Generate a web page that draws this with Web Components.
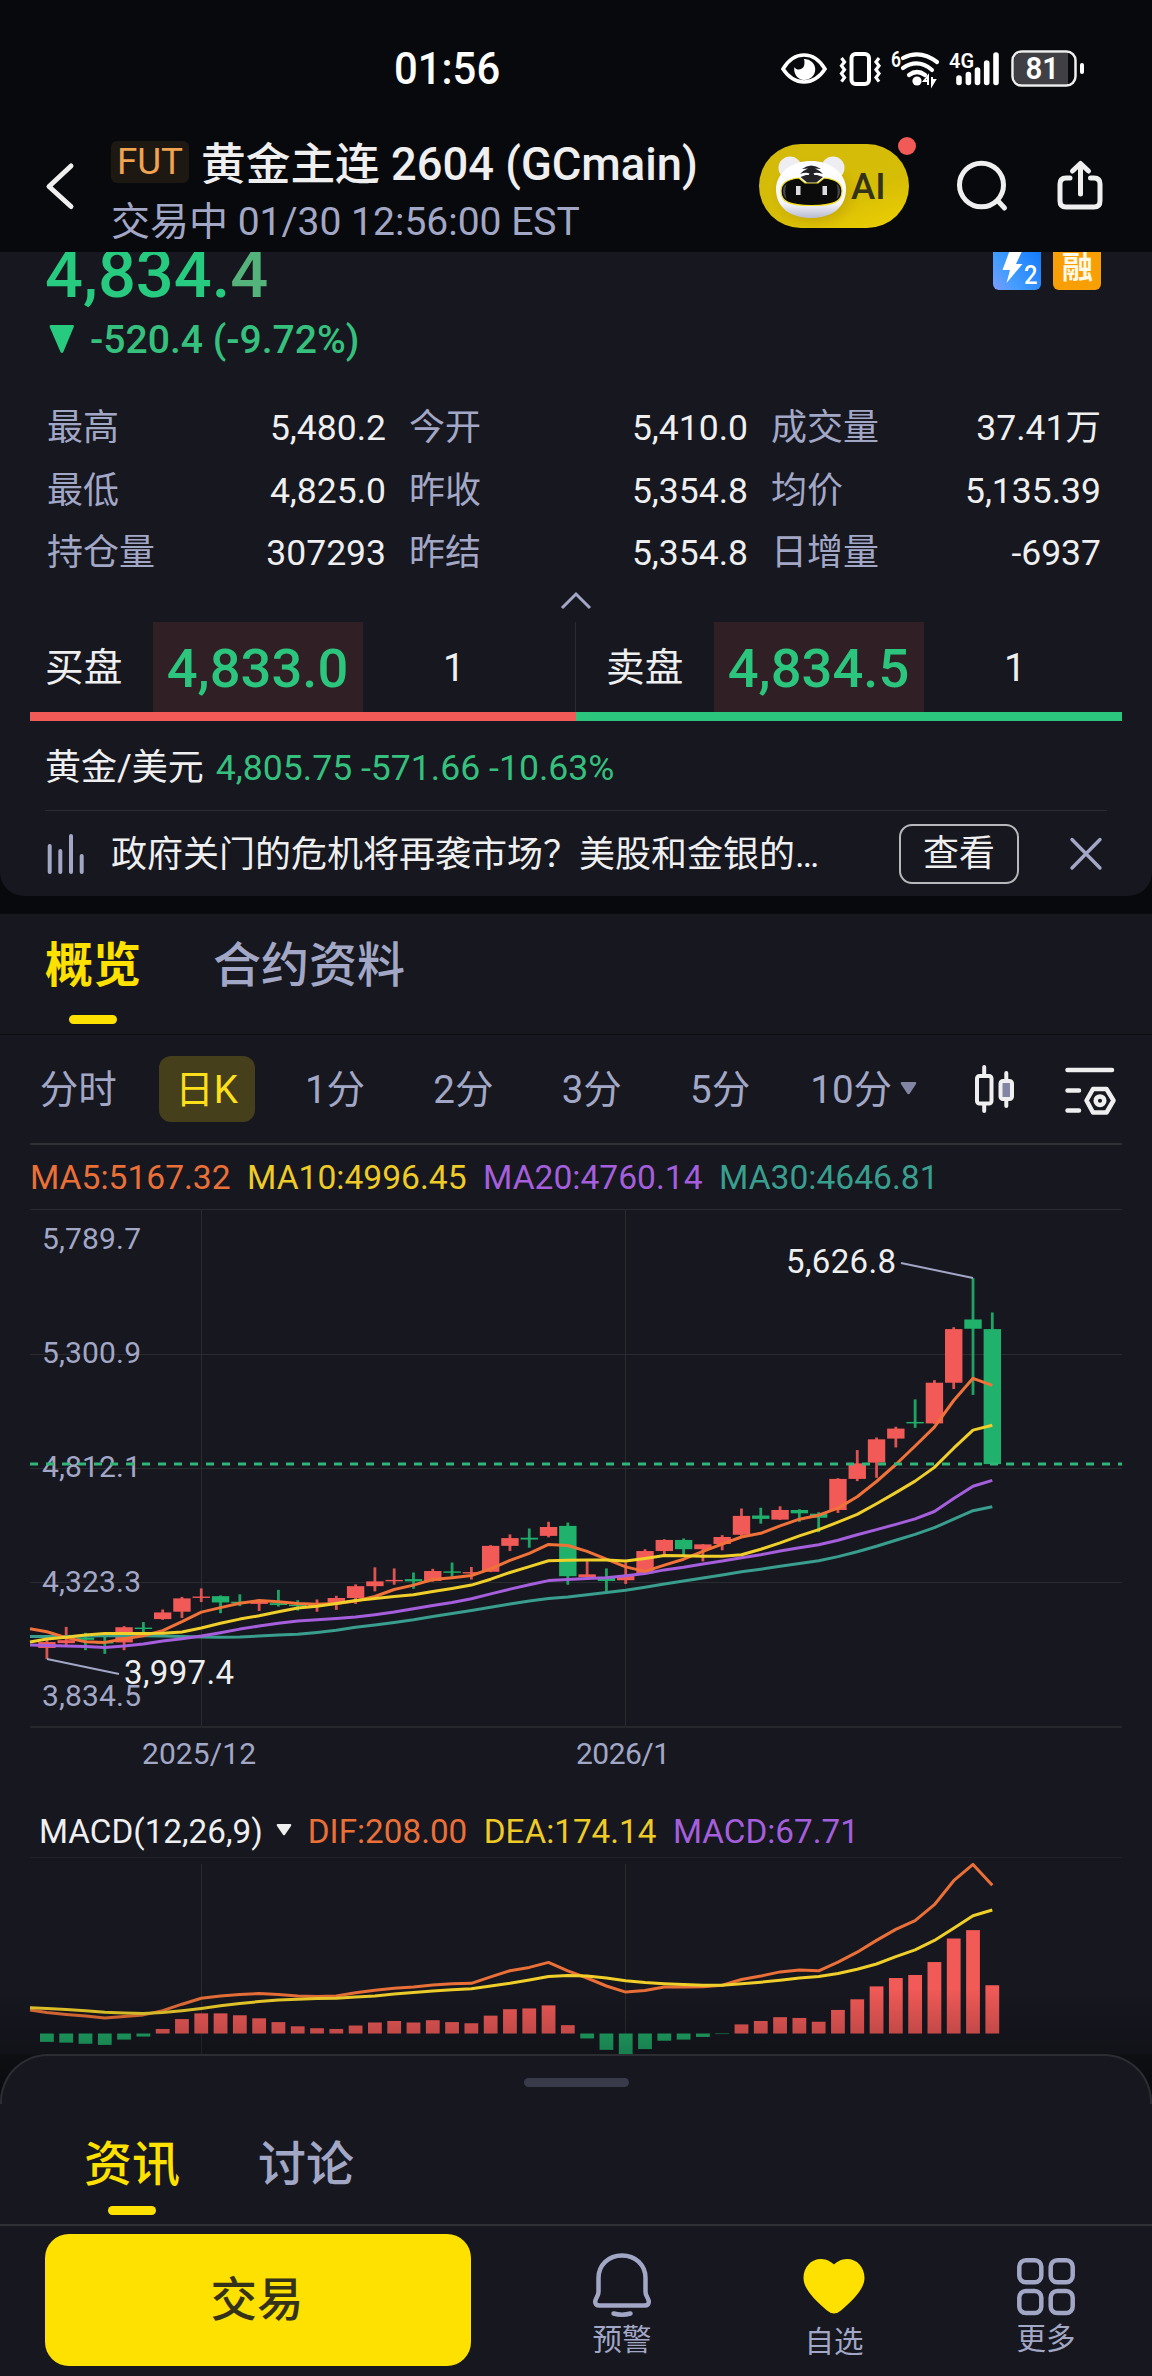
<!DOCTYPE html>
<html lang="zh-CN">
<head>
<meta charset="utf-8">
<title>黄金主连 2604 (GCmain)</title>
<style>
  :root {
    --bg: #16171f; --dark: #07090c; --muted: #a3a7c6; --text: #efeff0; --line: #2c2c32;
    --green: #2bc57d; --red: #f25a57; --yellow: #ffe100;
    --orange: #ea7038; --gold: #eecb26; --purple: #a55fdc; --teal: #399e8d;
  }
  html, body { margin: 0; background: var(--dark); }
  body { width: 1152px; height: 2376px; overflow: hidden; color: var(--text); font-family: Roboto, "Noto Sans CJK SC", sans-serif; }
</style>
</head>
<body>
<trade-app></trade-app>
<script>
function define(name, html, setup) {
  const t = document.createElement('template');
  t.innerHTML = html;
  customElements.define(name, class extends HTMLElement {
    constructor() {
      super();
      this.attachShadow({ mode: 'open' }).appendChild(t.content.cloneNode(true));
    }
    connectedCallback() { if (setup) setup(this, this.shadowRoot); }
  });
}

define('status-bar', `
<style>
  :host { display: flex; height: 137px; box-sizing: border-box; padding: 0 68px 0 394px; align-items: center; justify-content: space-between; color: #fff; }
  .time { font-size: 45px; font-weight: 500; line-height: 52px; transform: scaleX(.93); transform-origin: 0 50%; }
  .icons { display: flex; align-items: center; }
  svg { display: block; overflow: visible; }
  .battery { position: relative; width: 66px; height: 37px; margin-left: 2px; display: flex; align-items: center; justify-content: center; font-weight: 600; font-size: 32px; line-height: 37px; margin-right: 7px; }
  .battery svg { position: absolute; left: 0; top: 0; }
  .battery span { position: relative; transform: scaleX(.92); left: -2px; }
</style>
<div class="time">01:56</div>
<div class="icons">
  <svg width="228" height="37" viewBox="0 0 228 37" fill="none" stroke="#fff">
    <path d="M2 19C8 9 15 5 23 5s15 4 21 14C38 28 31 32 23 32S8 28 2 19Z" stroke-width="3.6"/>
    <path d="M23 9a10.500 10.500 0 1 1-9.500 8c2 4 8 3 9.500-1 .8-2.600.5-5 0-7Z" fill="#fff" stroke="none"/>
    <rect x="70.500" y="4" width="17.500" height="30" rx="4" stroke-width="4"/>
    <path d="M60.500 8l3 4-3 3.800 3 4-3 3.800 3 4-3 4" stroke-width="3.200"/>
    <path d="M98 8l-3 4 3 3.800-3 4 3 3.800-3 4 3 4" stroke-width="3.200"/>
    <g stroke-width="4.200" stroke-linecap="round"><path d="M122 8Q139 -1 156 12"/><path d="M122 18Q137 8 151 20"/><path d="M128 25Q136 19 144 25"/></g>
    <circle cx="136" cy="31" r="4.600" fill="#fff" stroke="none"/>
    <path d="M147 35V26l-4 5h5M151 27v8l3-5h-3" stroke-width="2"/>
    <g stroke-width="5.600" stroke-linecap="round"><path d="M178 28v4.500M187.400 24.500v8M196.500 20v12.500M205.700 13v19.500M215 5v27.500"/></g>
    <g fill="#fff" stroke="none" font-family="Roboto" font-weight="600"><text x="110" y="17" font-size="22" textLength="10" lengthAdjust="spacingAndGlyphs">6</text><text x="168" y="18" font-size="21" textLength="25" lengthAdjust="spacingAndGlyphs">4G</text></g>
  </svg>
  <div class="battery">
    <svg width="74" height="37" viewBox="0 0 74 37"><rect x="1.500" y="1.500" width="63" height="34" rx="9" fill="#07090c" stroke="#eee" stroke-width="2.500"/><path d="M10 3H57V34H10a7 7 0 0 1-7-7V10a7 7 0 0 1 7-7Z" fill="#404044"/><rect x="69" y="13" width="4" height="11" rx="2" fill="#fff"/></svg>
    <span>81</span>
  </div>
</div>`);

define('ai-pill', `
<style>
  :host { display: block; position: relative; width: 150px; height: 84px; border-radius: 42px; background: linear-gradient(160deg, #d3ba0b, #d6bd06 60%, #eed003); }
  svg { display: block; }
  b { position: absolute; left: 92px; top: 22px; font-weight: 500; font-size: 36.500px; line-height: 42px; color: #34331a; }
  i { position: absolute; right: -7px; top: -7px; width: 18px; height: 18px; border-radius: 50%; background: #f25a57; }
</style>
<svg width="150" height="84" viewBox="0 0 150 84">
  <defs><linearGradient id="h" x2="0" y2="1"><stop offset=".1" stop-color="#fff"/><stop offset=".75" stop-color="#f4f4fa"/><stop offset="1" stop-color="#b9bbd0"/></linearGradient>
  <radialGradient id="s"><stop offset=".4" stop-color="#a88700" stop-opacity=".7"/><stop offset="1" stop-color="#c9a800" stop-opacity="0"/></radialGradient></defs>
  <ellipse cx="56" cy="50" rx="46" ry="38" fill="url(#s)"/>
  <circle cx="31" cy="24" r="11.500" fill="#eeeef2"/><circle cx="74" cy="24" r="11.500" fill="#eeeef2"/>
  <path d="M52 17C70 17 85 27 87 43C88 64 72 74 52 74S16 64 17 43C19 27 34 17 52 17Z" fill="url(#h)"/>
  <path d="M22 47C22 38 30 35 40 34L46 39H59L65 34C75 35 83 38 83 47C83 58 74 61.500 52.500 61.500S22 58 22 47Z" fill="#0c0b0b" stroke="#f2df1d" stroke-width="1.200"/>
  <path d="M24 47.500c0-4.500 1.500-6.500 3.500-7.500-1.600 5-1.600 10 0 15-2.300-2-3.500-4.500-3.500-7.500ZM81 47.500c0-4.500-1.500-6.500-3.500-7.500 1.600 5 1.600 10 0 15 2.300-2 3.500-4.500 3.500-7.500Z" fill="#47474c"/>
  <path d="M41.500 33L48 38.500H57.500L64 33L58 31H47Z" fill="#242428"/>
  <path d="M43 25Q52 18 62 25L56 24.500Q60 26 64 30Q57 28 54.500 29.500L57 34H48L50.500 29.500Q47 28 41 30Q45 26 49 24.500Z" fill="#222226"/>
  <path d="M37 42h4.500v9H37zM63.500 42H68v9h-4.500z" fill="#dcdce0"/>
</svg><b>AI</b><i></i>`);

define('quote-header', `
<style>
  :host { display: flex; height: 115px; box-sizing: border-box; padding: 3px 45px 0 45px; align-items: flex-start; }
  svg { display: block; fill: none; stroke: #efeff0; stroke-width: 5; stroke-linecap: round; stroke-linejoin: round; }
  .titles { margin-left: 36px; width: 600px; margin-right: 48px; }
  .title { display: flex; align-items: center; height: 50px; font-size: 44.700px; line-height: 50px; font-weight: 500; white-space: nowrap; }
  .title em { font-style: normal; font-size: 45.300px; }
  .tag { box-sizing: border-box; width: 78px; height: 42px; margin: -6px 12px 0 0; border-radius: 6px; background: #1e1812; color: #f0a350; font-size: 36.800px; font-weight: 400; line-height: 41px; text-align: center; }
  .sub { margin-top: 9px; height: 46px; line-height: 46px; font-size: 39px; color: #a3a7c6; white-space: nowrap; }
</style>
<svg width="31" height="50" viewBox="0 0 31 50" style="margin:21px 0 0 -1px"><path d="M27 5L5 25.500L27 45.500"/></svg>
<div class="titles">
  <div class="title"><div class="tag">FUT</div><span>黄金主连<em> 2604 (GCmain)</em></span></div>
  <div class="sub"><span>交易中 01/30 12:56:00 EST</span></div>
</div>
<ai-pill style="margin-top:4px"></ai-pill>
<svg width="54" height="54" viewBox="0 0 54 54" style="margin:18px 0 0 46px"><ellipse cx="26.500" cy="27" rx="22" ry="21.800"/><path d="M43.500 43.500L49.500 50"/></svg>
<svg width="50" height="52" viewBox="0 0 50 52" style="margin:20px 0 0 47px"><path d="M14 18H10Q4 18 4 24V41Q4 47 10 47H38Q44 47 44 41V24Q44 18 38 18H34.500M24.500 34V4M16.500 11L24.500 3.500L32.500 11"/></svg>`);

define('stat-item', `
<style>
  :host { display: flex; justify-content: space-between; height: 62.700px; line-height: 64px; font-size: 35.500px; }
  .l { color: var(--muted); font-size: 36px; }
</style>
<span class="l"></span><span><slot></slot></span>`, (el, r) => r.querySelector('.l').textContent = el.getAttribute('label'));

define('order-side', `
<style>
  :host { display: flex; align-items: center; height: 90px; font-size: 38.700px; }
  .l { width: 108px; line-height: 93px; }
  .p { width: 209px; height: 90px; padding-right: 1px; background: #301f25; color: var(--green); font-weight: 500; font-size: 54.300px; line-height: 93px; text-align: center; }
  .q { margin-left: 80px; line-height: 93px; }
</style>
<span class="l"></span><div class="p"><slot></slot></div><span class="q">1</span>`,
(el, r) => r.querySelector('.l').textContent = el.getAttribute('label'));

define('quote-card', `
<style>
  :host { display: block; box-sizing: border-box; height: 644px; overflow: hidden; background: var(--bg); border-radius: 0 0 24px 24px; }
  .top { display: flex; justify-content: space-between; padding: 0 51px 0 45px; height: 52px; align-items: flex-start; }
  .price { font-size: 66.800px; font-weight: 500; line-height: 60px; margin-top: -8px; color: #27cb80; }
  .price i { font-style: normal; color: #54b27b; }
  .badges { display: flex; gap: 12px; margin-top: -10px; }
  .badges svg { display: block; }
  .chg { display: flex; align-items: center; height: 44px; margin: 14px 0 0 49px; font-size: 39.100px; line-height: 44px; font-weight: 500; color: #36c07d; }
  .chg svg { margin: -3px 15px 0 0; }
  .stats { display: grid; grid-template-columns: 339px 339px 330px; column-gap: 23px; height: 189px; align-content: start; margin: 34px 0 0 47px; }
  .up { display: flex; justify-content: center; height: 37px; align-items: center; }
  .up svg { margin-top: -5px; }
  .sides { display: flex; height: 90px; }
  order-side:first-child { padding-left: 45px; width: 530px; border-right: 1px solid #2b2c33; }
  order-side:last-child { padding-left: 30px; }
  .bar { display: flex; height: 9px; margin: 0 30px; }
  .bar i { flex: 1; background: var(--red); } .bar i + i { background: var(--green); }
  .spot { display: flex; height: 83px; padding-top: 6px; margin: 0 45px; line-height: 82px; font-size: 36px; gap: 12px; border-bottom: 1px solid var(--line); box-sizing: content-box; }
  .spot span + span { color: #36c07d; font-size: 35.600px; }
  .note { display: flex; align-items: center; height: 85px; padding: 0 49px 0 47px; font-size: 36px; line-height: 52px; }
  .note p { margin: 3px auto 0 27px; white-space: nowrap; }
  .note button { all: unset; box-sizing: border-box; width: 120px; height: 60px; border: 2px solid #b8b8bc; border-radius: 13px; text-align: center; line-height: 57px; margin-right: 50px; }
</style>
<div class="top">
  <div class="price">4,834.<i>4</i></div>
  <div class="badges">
    <svg width="48" height="48" viewBox="0 0 48 48"><defs><linearGradient id="b" x1="0" y1="1" x2="1" y2=".3"><stop offset="0" stop-color="#7d9bff"/><stop offset=".35" stop-color="#449dff"/><stop offset="1" stop-color="#187dfb"/></linearGradient></defs><rect width="48" height="48" rx="6" fill="url(#b)"/><path d="M18 5H31L23 22H29.500L13.500 41L17 28H9.500Z" fill="#fff"/><text x="31" y="41.500" font-family="Roboto" font-weight="500" font-size="26" textLength="13.500" lengthAdjust="spacingAndGlyphs" fill="#fff">2</text></svg>
    <svg width="48" height="48" viewBox="0 0 48 48"><rect width="48" height="48" rx="6" fill="#f99f06"/><text x="9" y="36" font-family="Noto Sans CJK SC" font-weight="700" font-size="31" fill="#fffbe8">融</text></svg>
  </div>
</div>
<div class="chg"><svg width="26" height="30" viewBox="0 0 26 30"><path d="M2 1H23.500Q25.500 1 24.700 3L14.300 28Q13 30 11.500 28L.7 3Q0 1 2 1Z" fill="#27cb80"/></svg>-520.4 (-9.72%)</div>
<div class="stats">
  <stat-item label="最高">5,480.2</stat-item><stat-item label="今开">5,410.0</stat-item><stat-item label="成交量">37.41万</stat-item>
  <stat-item label="最低">4,825.0</stat-item><stat-item label="昨收">5,354.8</stat-item><stat-item label="均价">5,135.39</stat-item>
  <stat-item label="持仓量">307293</stat-item><stat-item label="昨结">5,354.8</stat-item><stat-item label="日增量">-6937</stat-item>
</div>
<div class="up"><svg width="32" height="20" viewBox="0 0 32 20"><path d="M2 17L16 3L30 17" fill="none" stroke="#a3a7c6" stroke-width="3"/></svg></div>
<div class="sides"><order-side label="买盘">4,833.0</order-side><order-side label="卖盘">4,834.5</order-side></div>
<div class="bar"><i></i><i></i></div>
<div class="spot"><span>黄金/美元</span><span>4,805.75 -571.66 -10.63%</span></div>
<div class="note">
  <svg width="37" height="40" viewBox="0 0 37 40"><path d="M2.700 12V38M13.300 17V38M24 2V38M34.700 22V38" stroke="#a3a7c6" stroke-width="4" stroke-linecap="round"/></svg>
  <p>政府关门的危机将再袭市场？美股和金银的…</p>
  <button>查看</button>
  <svg width="34" height="34" viewBox="0 0 34 34"><path d="M3 2.500L31 31M31 2.500L3 31" stroke="#a3a7c6" stroke-width="3.400" stroke-linecap="round"/></svg>
</div>`);

define('tab-item', `
<style>
  :host { display: flex; flex-direction: column; align-items: center; font-size: 48px; font-weight: 500; line-height: 56px; color: var(--muted); }
  :host([active]) { color: var(--yellow); }
  i { display: none; width: 48px; height: 9px; border-radius: 5px; background: var(--yellow); margin-top: var(--gap, 21px); }
  :host([active]) i { display: block; }
</style><slot></slot><i></i>`);

define('period-bar', `
<style>
  :host { display: flex; align-items: center; height: 108px; padding-left: 14px; font-size: 38.500px; color: var(--muted); border-top: 1px solid #0b0c10; }
  span { width: 128.400px; display: flex; justify-content: center; line-height: 67px; }
  b { width: 96px; height: 66px; border-radius: 12px; background: #453f1b; color: #fde01a; font-weight: 400; text-align: center; }
  em { font-style: normal; line-height: 67px; margin: 0 8px 0 26px; }
</style>
<span>分时</span><span><b>日K</b></span><span>1分</span><span>2分</span><span>3分</span><span>5分</span><em>10分</em>
<svg style="margin-top:-2px" width="17" height="13" viewBox="0 0 17 13"><path d="M1.500 0H15.500Q17 .5 16 2L9.800 11.500Q8.500 13 7.200 11.500L1 2Q0 .5 1.500 0Z" fill="#8286a4"/></svg>
<svg style="margin-left:57px" width="42" height="50" viewBox="0 0 42 50"><g fill="none" stroke="#efeff0" stroke-width="4" stroke-linecap="round"><rect x="3" y="12" width="14.500" height="27.500" rx="2.500"/><path d="M10.200 3V12M10.200 40V47"/><path d="M32.300 9V17M32.300 35V42"/><rect x="26.500" y="17" width="11.500" height="18" rx="2.500" fill="#8286a4"/></g></svg>
<svg style="margin:3px 0 0 48px" width="52" height="50" viewBox="0 0 52 50"><g fill="none" stroke="#efeff0" stroke-width="4.500" stroke-linecap="round" stroke-linejoin="round"><path d="M3.500 4H48M3.500 24.500H15M3.500 44.500H15M29 23H42.500L49.500 34.500L42.500 46.500H29L22.500 34.500Z"/><circle cx="36" cy="34.700" r="4.300"/></g></svg>`);

define('legend-row', `
<style>
  :host { display: flex; align-items: center; height: 64px; padding-left: 30px; font-size: 33.600px; line-height: 52px; gap: 16.500px; white-space: nowrap; }
  ::slotted(span) { padding-top: var(--drop, 1px); }
  ::slotted([c=orange]) { color: var(--orange); } ::slotted([c=gold]) { color: var(--gold); }
  ::slotted([c=purple]) { color: var(--purple); } ::slotted([c=teal]) { color: var(--teal); }
</style><slot></slot>`);

const STEP = 19.294, X0 = 46.9;
const cx = i => X0 + STEP * i;
const line = (vals, y, color) =>
  `<polyline fill="none" stroke="${color}" stroke-width="3" stroke-linejoin="round" points="${vals.map((v, k) => (k ? cx(k - 1) : 30).toFixed(1) + ',' + y(v).toFixed(1)).join(' ')}"/>`;

/* direction, high, body top, body bottom, low: in plot units below the chart's origin */
const CANDLES = `r 1188 1195 1211 1241|r 1154 1190 1198 1204|g 1170 1183 1189 1217|g 1178 1193 1199 1227|r 1152 1155 1196 1217|g 1141 1156 1159 1173|r 1107 1115 1133 1135|r 1073 1077 1113 1130|r 1050 1072 1075 1087|g 1069 1071 1088 1117|g 1066 1086 1090 1098|r 1084 1086 1092 1111|g 1054 1090 1095 1099|g 1082 1094 1098 1110|r 1080 1092 1097 1113|r 1070 1076 1089 1108|r 1039 1044 1076 1092|r 993 1031 1044 1058|r 996 1027 1030 1040|g 1007 1025 1031 1051|r 997 1003 1030 1032|g 980 1004 1007 1018|r 992 1006 1009 1026|r 933 935 1005 1006|r 904 914 935 949|g 888 913 918 940|r 870 884 908 912|g 872 881 1017 1040|r 976 1012 1020 1022|g 996 1019 1030 1062|r 980 1016 1028 1038|r 944 949 1009 1010|r 917 919 949 961|g 915 919 944 960|r 930 931 944 977|r 906 911 930 947|r 834 854 905 910|g 832 853 862 875|r 828 838 864 865|g 836 838 847 870|g 844 848 859 898|r 752 754 838 846|r 676 712 754 760|r 642 647 710 751|r 613 618 645 669|g 539 600 604 616|r 487 494 604 605|r 344 349 494 511|g 211 323 348 527|g 304 349 714 716`
  .split('|').map(s => s.split(' '));
const MA = {
  '#399e8d': [1180,1180,1180,1179,1178,1177,1178,1179,1180,1181,1182,1181,1179,1176,1174,1169,1163,1155,1149,1142,1135,1126,1118,1110,1101,1092,1084,1077,1073,1067,1061,1055,1047,1038,1030,1022,1014,1005,998,990,983,975,964,951,936,920,904,886,863,840,829],
  '#a55fdc': [1203,1204,1206,1207,1210,1206,1200,1192,1186,1179,1170,1160,1152,1144,1138,1135,1131,1127,1121,1114,1105,1096,1088,1078,1065,1052,1040,1029,1026,1023,1021,1016,1010,1000,993,984,976,967,959,949,940,932,920,905,891,877,862,842,807,774,758],
  '#f07238': [1159,1167,1183,1194,1196,1186,1178,1164,1140,1114,1102,1090,1083,1086,1091,1093,1091,1084,1072,1053,1041,1026,1021,1015,997,974,955,931,934,950,971,992,1004,987,971,950,930,911,901,881,863,852,833,802,761,715,665,614,542,482,501],
  '#f0cf2a': [1195,1187,1182,1176,1172,1172,1172,1171,1168,1157,1144,1133,1124,1113,1103,1098,1091,1083,1077,1072,1067,1058,1050,1041,1025,1007,991,975,974,973,973,976,969,961,962,963,963,959,944,927,908,891,871,850,821,791,760,723,671,622,609]
};
define('k-chart', `<style>:host { display: block; } svg { display: block; }</style><div></div>`, (el, r) => {
  const y = v => 1200 + v / 2.7034 - 1209;
  let s = '<g stroke="#2a2b31" fill="none"><path d="M30 .5H1122M30 145.500H1122M30 259.500H1122M30 373.500H1122M201.500 0V518M625.500 0V518"/><path d="M30 518H1122" stroke-width="2" stroke="#26272c"/></g>';
  CANDLES.forEach(([d, h, t, b, l], i) => {
    const c = d === 'r' ? '#f25a57' : '#20b26c', x = cx(i);
    s += `<rect x="${x - 1.4}" y="${y(+h)}" width="2.8" height="${(l - h) / 2.7034}" fill="${c}" opacity=".9"/><rect x="${x - 8.7}" y="${y(+t)}" width="17.4" height="${Math.max(1.4, (b - t) / 2.7034)}" fill="${c}"/>`;
  });
  ['5,789.7', '5,300.9', '4,812.1', '4,323.3', '3,834.5'].forEach((v, i) =>
    s += `<text x="42" y="${[40, 154, 268, 382.500, 496.500][i]}" font-size="30" fill="#a3a7c6" textLength="99">${v}</text>`);
  for (const c in MA) s += line(MA[c], y, c);
  s += '<path d="M30 255H1122" stroke="#2fb678" stroke-width="3" stroke-dasharray="8 8"/>';
  s += '<g stroke="#a3a7c6" stroke-width="2"><path d="M47 450L119 465M901 54L973 69"/></g>';
  s += '<g fill="#efeff0" font-size="33"><text x="124" y="474.500" textLength="110">3,997.4</text><text x="786" y="64.200" textLength="110">5,626.8</text></g>';
  s += '<g fill="#a3a7c6" font-size="30"><text x="142" y="555" textLength="114">2025/12</text><text x="576" y="555" textLength="94">2026/1</text></g>';
  r.querySelector('div').innerHTML = `<svg width="1152" height="590" viewBox="0 0 1152 590" font-family="Roboto">${s}</svg>`;
});

const HIST = [689,691,694,697,683,675,655,629,614,614,619,627,637,648,653,655,646,638,634,638,632,637,640,620,603,601,593,645,680,710,723,708,686,683,676,668.500,643,634,624,626,636,605,577,543,521,513,479,417,395,540];
const DIF = [605,612,617,621,626,622,618,607,590,574,568,564,562,564,568,570,568,560,553,548,545,539,536,535,518,502,493,480,502,521,542,558,554,545,545,544,540,525,516,505,500,502,479,453,422,393,370,328,265,222,277];
const DEA = [599,601,604,607,611,613,614,612,607,601,594,588,583,579,577,575,574,571,568,563,559,555,552,549,542,535,526,517,514,516,521,528,533,536,538,540,540,536,532,527,521,517,509,498,484,465,447,422,390,357,342];
define('macd-chart', `<style>:host { display: block; } svg { display: block; }</style><div></div>`, (el, r) => {
  const y = v => 1780 + v / 2.631 - 1857;
  let s = '<path d="M30 .5H1122" stroke="#222329"/><path d="M201.500 7V197M625.500 7V197" stroke="#2a2b31"/>';
  HIST.forEach((v, i) => {
    const top = Math.min(v, 667), h = Math.abs(v - 667) / 2.631;
    s += `<rect x="${cx(i) - 6.9}" y="${y(top)}" width="13.8" height="${h}" fill="${v > 667 ? '#20b26c' : '#f25a57'}"/>`;
  });
  s += line(DIF, y, '#ea7038') + line(DEA, y, '#f0cf2a');
  r.querySelector('div').innerHTML = `<svg width="1152" height="197" viewBox="0 0 1152 197">${s}</svg>`;
});

define('chart-panel', `
<style>
  :host { display: block; position: relative; height: 1140px; background: var(--bg); overflow: hidden; }
  .tabs { display: flex; gap: 72px; box-sizing: border-box; height: 120px; padding: 24px 0 0 45px; }
  hr { border: 0; height: 2px; margin: 0 30px; background: #2f2f34; }
  .macd { --drop: 0px; height: 51px; margin-top: 7px; padding-left: 39px; gap: 16.500px; font-size: 33.250px; line-height: 50px; }
  .macd svg { margin: -3px 0 0 -3px; }
  .shade { position: absolute; left: 0; right: 0; bottom: 0; height: 66px; background: linear-gradient(rgba(8,9,11,0), rgba(8,9,11,.3)); }
</style>
<div class="tabs"><tab-item active style="font-weight:700">概览</tab-item><tab-item>合约资料</tab-item></div>
<period-bar></period-bar>
<hr>
<legend-row><span c="orange">MA5:5167.32</span><span c="gold">MA10:4996.45</span><span c="purple">MA20:4760.14</span><span c="teal">MA30:4646.81</span></legend-row>
<k-chart></k-chart>
<legend-row class="macd"><span>MACD(12,26,9)</span><svg width="16" height="12" viewBox="0 0 16 12"><path d="M1.500 0H14.500Q16 .4 15 2L9 10.700Q8 12 7 10.700L1 2Q0 .4 1.500 0Z" fill="#efeff0"/></svg><span c="orange" style="margin-left:-1px">DIF:208.00</span><span c="gold">DEA:174.14</span><span c="purple">MACD:67.71</span></legend-row>
<macd-chart></macd-chart>
<div class="shade"></div>`);

define('bottom-sheet', `
<style>
  :host { display: block; height: 170px; background: linear-gradient(#0e0f13, #090a0d 50px, var(--bg) 50px); }
  .sheet { position: relative; height: 170px; box-sizing: border-box; background: var(--bg); border-radius: 48px 48px 0 0; padding-top: 24px; }
  .edge { position: absolute; left: 0; top: 0; right: 0; height: 50px; box-sizing: border-box; border: 2px solid #2c2d33; border-bottom: 0; border-radius: 48px 48px 0 0; }
  .grip { width: 105px; height: 9px; border-radius: 5px; background: #3a3b4a; margin: 0 auto; }
  .tabs { display: flex; gap: 78px; padding: 50px 0 0 84px; --gap: 13px; }
</style>
<div class="sheet"><div class="edge"></div><div class="grip"></div><div class="tabs"><tab-item active>资讯</tab-item><tab-item>讨论</tab-item></div></div>`);

define('nav-item', `
<style>
  :host { display: flex; flex-direction: column; align-items: center; width: 212px; font-size: 29.500px; line-height: 36px; color: var(--muted); }
  ::slotted(svg) { display: block; }
</style><slot name="icon"></slot><slot></slot>`);

define('bottom-nav', `
<style>
  :host { display: flex; box-sizing: border-box; height: 152px; padding: 8px 0 0 45px; border-top: 2px solid #2f3035; background: var(--bg); }
  button { all: unset; width: 426px; height: 132px; border-radius: 24px; background: var(--yellow); color: #34331a; font-size: 46.500px; font-weight: 500; line-height: 131px; text-align: center; text-indent: -2px; margin-right: 45px; }
</style>
<button>交易</button>
<nav-item><svg slot="icon" width="62" height="88" viewBox="0 0 62 88" fill="none" stroke="#a3a7c6" stroke-width="4.500" stroke-linecap="round" stroke-linejoin="round"><path d="M31 21.500C17.500 21.500 7.500 31 7.500 44V58C7.500 62 4.500 64 4.200 67.500Q4 71.500 8.500 71.500H53.500Q58 71.500 57.800 67.500C57.500 64 54.500 62 54.500 58V44C54.500 31 44.500 21.500 31 21.500Z"/><path d="M22.500 79.500Q31 82 39.500 79.500"/></svg>预警</nav-item>
<nav-item><svg slot="icon" width="62" height="90" viewBox="0 0 62 90"><path d="M31 30.500C34 28 38 25 44 25C54 25 61.500 33 61.500 44C61.500 55 50 66 38 76.500Q31 82.500 24 76.500C12 66 .5 55 .5 44C.5 33 8 25 18 25C24 25 28 28 31 30.500Z" fill="#ffe100"/></svg>自选</nav-item>
<nav-item><svg slot="icon" width="60" height="87" viewBox="0 0 60 87" fill="none" stroke="#a3a7c6" stroke-width="4.500"><rect x="3.300" y="26.200" width="22" height="22" rx="6.500"/><rect x="34.700" y="26.200" width="22" height="22" rx="6.500"/><rect x="3.300" y="57" width="22" height="22" rx="6.500"/><rect x="34.700" y="57" width="22" height="22" rx="6.500"/></svg>更多</nav-item>`);

define('trade-app', `
<style>:host { display: flex; flex-direction: column; width: 1152px; height: 2376px; background: var(--dark); } quote-card { margin-bottom: 18px; }</style>
<status-bar></status-bar><quote-header></quote-header><quote-card></quote-card><chart-panel></chart-panel><bottom-sheet></bottom-sheet><bottom-nav></bottom-nav>`);
</script>
</body>
</html>
